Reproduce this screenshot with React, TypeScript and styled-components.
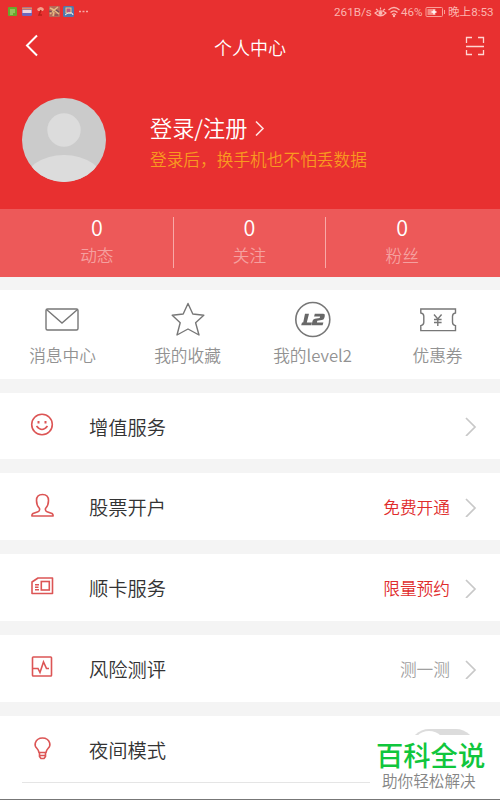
import React from "react";
import styled, { createGlobalStyle } from "styled-components";

const GlobalStyle = createGlobalStyle`
  *, *::before, *::after { box-sizing: border-box; }
  body { margin: 0; background: #f4f4f4; }
  svg { display: block; flex: none; }
`;

const Screen = styled.main`
  position: relative;
  width: 500px;
  height: 800px;
  overflow: hidden;
  background: #f4f4f4;
  font-family: "Noto Sans CJK SC", "Noto Sans", sans-serif;
  font-weight: 350;
  white-space: nowrap;
`;

const Hero = styled.header`
  height: 209px;
  background: #e83030;
  color: #fff;
`;

const StatusBar = styled.div`
  display: flex;
  justify-content: space-between;
  height: 23px;
  padding: 0 7px;
`;

const StatusGroup = styled.div`
  display: flex;
  align-items: center;
  height: 23px;
  color: #fbb4ae;
`;

const StatusText = styled.span<{ $width: number; $size?: number }>`
  width: ${(p) => p.$width}px;
  font-family: Roboto, "Noto Sans CJK SC", sans-serif;
  font-size: ${(p) => p.$size ?? 11.6}px;
  font-weight: 400;
  line-height: 22px;
  padding-top: 1px;
`;

const NavBar = styled.nav`
  display: flex;
  align-items: center;
  justify-content: space-between;
  height: 46px;
  padding: 0 15px 0 24px;
`;

const NavTitle = styled.h1`
  margin: 0;
  padding: 2px 5px 0 0;
  font-size: 18px;
  font-weight: 350;
  line-height: 24px;
`;

const Profile = styled.section`
  display: flex;
  padding: 29px 0 0 22px;
`;

const ProfileText = styled.div`
  padding: 13px 0 0 44px;
`;

const LoginLink = styled.div`
  display: flex;
  align-items: center;
  gap: 8px;
  height: 34px;
  padding-bottom: 1px;
  font-size: 22.2px;
  line-height: 33px;
`;

const LoginHint = styled.div`
  color: #f99a20;
  font-size: 16.7px;
  line-height: 28px;
`;

const Stats = styled.section`
  display: flex;
  justify-content: center;
  height: 68px;
  padding: 8px 22px 0 21px;
  background: #ed5959;
`;

const Stat = styled.div`
  flex: 1;
  height: 51px;
  text-align: center;
  & + & { border-left: 1px solid #f8a9a7; }
`;

const StatValue = styled.div`
  color: #fff;
  font-size: 21.5px;
  line-height: 20px;
  height: 22px;
`;

const StatLabel = styled.div`
  color: #f5a09f;
  font-size: 16.7px;
  line-height: 32px;
`;

const Shortcuts = styled.section`
  display: grid;
  grid-template-columns: repeat(4, 1fr);
  height: 89px;
  margin: 13px 0 14px;
  background: #fff;
`;

const Shortcut = styled.div`
  display: flex;
  flex-direction: column;
  align-items: center;
  gap: 2px;
  padding-top: 9px;
  color: #929292;
  font-size: 16.7px;
  line-height: 29px;
`;

const MenuRow = styled.section<{ $height: number }>`
  display: flex;
  align-items: center;
  height: ${(p) => p.$height}px;
  margin-bottom: 14px;
  padding: 0 23px 0 29px;
  background: #fff;
`;

const MenuIcon = styled.div`
  width: 60px;
  padding-bottom: 3px;
`;

const MenuLabel = styled.div`
  flex: 1;
  padding-top: 1px;
  color: #333;
  font-size: 19.3px;
  line-height: 30px;
`;

const MenuNote = styled.div<{ $muted?: boolean }>`
  margin-right: 15px;
  color: ${(p) => (p.$muted ? "#a0a0a0" : "#df2d2d")};
  font-size: 16.7px;
  padding-top: 1px;
  line-height: 30px;
`;

const NightPanel = styled.section`
  height: 84px;
  background: #fff;
  border-bottom: 1px solid #777;
`;

const NightRow = styled(MenuRow)`
  margin: 0 0 0 22px;
  padding: 0 25px 0 7px;
  border-bottom: 1px solid #e5e5e5;
`;

const SwitchTrack = styled.div`
  width: 65px;
  height: 38px;
  margin-bottom: 3px;
  border-radius: 19px;
  background: #dcdcdc;
  padding: 2px;
`;

const SwitchKnob = styled.div`
  width: 34px;
  height: 34px;
  border-radius: 50%;
  background: #fff;
`;

const Watermark = styled.aside`
  position: absolute;
  right: 0;
  bottom: 1px;
  width: 130px;
  height: 64px;
  background: #fff;
`;

const WatermarkTitle = styled.div`
  padding: 3px 0 0 6px;
  color: #10c63c;
  font-size: 27.3px;
  font-weight: 500;
  line-height: 32px;
  height: 36px;
`;

const WatermarkText = styled.div`
  padding-left: 12px;
  color: #858585;
  font-size: 15.6px;
  line-height: 18px;
`;

const NotificationIcons = () => (
  <svg width="82" height="12" viewBox="0 0 82 12">
    <rect x="1" y="1" width="9" height="9" rx="1" fill="#69a82c" />
    <path d="M3 4h5M3 6h5M3 8h3" stroke="#bfd98b" fill="none" />
    <rect x="15" y="1" width="10" height="9" rx="1.5" fill="#6d66bd" />
    <path d="M15 2.5h10" stroke="#e58a62" strokeWidth="2" />
    <rect x="15.5" y="4" width="9" height="3" fill="#ecd4df" />
    <path d="M30 3q4-4 7 0l-1 2h-5z" fill="#f3a08b" />
    <path d="M34 4l-2 5h3" fill="none" stroke="#b82119" strokeWidth="1.5" />
    <rect x="42" y="0" width="11" height="11" rx="1" fill="#b5685a" />
    <path d="M43 2l4 2 4-3M43 8l4-4 5 4M47 6l-1 4" fill="none" stroke="#e3ba83" strokeWidth="1.5" />
    <path d="M49 4l3 2M42 5l3 1M48 9h3" stroke="#6d4b58" strokeWidth="1.2" />
    <rect x="56" y="0" width="11" height="11" rx="1.5" fill="#5277ae" />
    <rect x="59" y="2" width="5" height="5" fill="#b65386" stroke="#e7cd81" />
    <path d="M58 9l3-2h4l1 2" stroke="#eee" fill="none" />
    <path d="M72 5.5h2M75.5 5.5h2M79 5.5h2" stroke="#f7aaa5" strokeWidth="1.5" />
  </svg>
);

const StatusIcons = () => (
  <svg width="28" height="14" viewBox="0 0 28 14">
    <g fill="none" stroke="#fbb8b2" strokeWidth="1.2">
      <path d="M2 8Q7.500 3.500 13 8Q7.500 13.500 2 8Z" />
      <path d="M3 4l2 1.500M7.500 2.500v2M12 4l-2 1.500" />
      <path d="M15.500 5Q21 0 26.500 5M17.500 7.500Q21 4 24.500 7.500M19 9.700q2-1.700 4 0" />
    </g>
    <circle cx="7.5" cy="8" r="2" fill="#fbb8b2" />
    <circle cx="21" cy="11" r="1.2" fill="#fbb8b2" />
  </svg>
);

const Battery = () => (
  <svg width="23" height="12" viewBox="0 0 23 12">
    <rect x="1" y="1.5" width="16.5" height="9" rx="1" fill="none" stroke="#f99e98" />
    <rect x="2.5" y="3" width="8" height="6" fill="#f68a84" />
    <path d="M19.500 4v4" stroke="#f99e98" />
    <path d="M9 3.500v5M6.500 6h5" stroke="#fff" strokeWidth="1.3" />
  </svg>
);

const BackIcon = () => (
  <svg width="16" height="24" viewBox="0 0 16 24" fill="none" stroke="#fff" strokeWidth="2">
    <path d="M13 1.500L3 11.500l10 10" />
  </svg>
);

const ScanIcon = () => (
  <svg width="20" height="20" viewBox="0 0 20 20" fill="none" stroke="#ffd5d2" strokeWidth="1.3">
    <path d="M1.500 7V1.500H7M13 1.500h5.500V7M1.500 14v4.500H7M13 18.500h5.500V14M1 10.500h18" />
  </svg>
);

const Avatar = () => (
  <svg width="84" height="84" viewBox="0 0 84 84">
    <defs>
      <clipPath id="avatar-clip"><circle cx="42" cy="42" r="42" /></clipPath>
    </defs>
    <g clipPath="url(#avatar-clip)">
      <rect width="84" height="84" fill="#cbcbcb" />
      <circle cx="42" cy="32" r="16.7" fill="#dcdcdc" />
      <ellipse cx="42" cy="86" rx="41" ry="29" fill="#dcdcdc" />
    </g>
  </svg>
);

const Chevron = ({ light = false }: { light?: boolean }) =>
  light ? (
    <svg width="10" height="16" viewBox="0 0 10 16" fill="none" stroke="#ffe2e0" strokeWidth="1.6">
      <path d="M1 1.500l7 7-7 7" />
    </svg>
  ) : (
    <svg width="12" height="20" viewBox="0 0 12 20" fill="none" stroke="#c8c8c8" strokeWidth="1.7">
      <path d="M1 2l9 9-9 9" />
    </svg>
  );

const shortcutIcons = {
  mail: (
    <>
      <rect x="5" y="10" width="32" height="21" rx="1.5" />
      <path d="M5.500 10.500L21 24 36.500 10.500" />
    </>
  ),
  star: <path d="M22 4.500l4.800 10.500 11 1.300-8.200 7.400 3.400 12.300L22 30 11 36l3.200-12.300-8-7.400 11-1.300z" strokeLinejoin="round" />,
  level: (
    <>
      <circle cx="21.8" cy="20.5" r="17" strokeWidth="1.6" />
      <g fill="#686868" stroke="none">
        <path d="M14 14.800h4l-2.200 8.600h5.200l-.8 2.900h-10l.8-2.900h1.200z" />
        <path d="M23.800 14.800h8.500q2 0 1.500 2.100l-.5 2q-.5 1.900-2.500 2.200l-4.500.7-.4 1.600h6.500l-.8 2.900H20.500l1.100-4.500q.4-1.700 2.300-2l4.800-.7.400-1.500h-6z" />
      </g>
    </>
  ),
  coupon: (
    <>
      <path d="M4.800 10h34.700v4q-3 .4-3 3.300v6q0 2.900 3 3.300v5H4.800v-5q3-.4 3-3.300v-6q0-2.900-3-3.300z" />
      <path d="M18 15.500l3.800 4.500 3.800-4.500M21.800 20v7M18 20.500h7.600M18 23.500h7.600" />
    </>
  ),
};

const shortcuts: { label: string; icon: keyof typeof shortcutIcons }[] = [
  { label: "消息中心", icon: "mail" },
  { label: "我的收藏", icon: "star" },
  { label: "我的level2", icon: "level" },
  { label: "优惠券", icon: "coupon" },
];

const menuIcons = {
  smile: (
    <>
      <circle cx="13" cy="13.5" r="10.3" />
      <path d="M7.500 15q5.500 7 11 0" />
      <path d="M9.500 10v2.500M16.500 10v2.500" strokeWidth="2" />
    </>
  ),
  person: (
    <path d="M10.500 16.500q-3-3-3-8Q7.500 2.500 13.500 2.500t6 6q0 5-3 8-.6 2.500 1.500 3.200l5 1.800q1.400 1 1 2.500H3q-.4-1.500 1-2.500l5-1.800q2.100-.7 1.500-3.200z" strokeLinejoin="round" />
  ),
  card: (
    <>
      <path d="M9 5h14.500v15.500H3V9z" strokeLinejoin="round" />
      <rect x="12.3" y="8.5" width="8" height="8.5" />
      <path d="M6 11.800h4M6 14.300h3.500M6 16.800h4" />
    </>
  ),
  pulse: (
    <>
      <rect x="3.5" y="3" width="19" height="19" rx=".8" />
      <path d="M4 14.500h5l2 4 3.500-10.500 3 6.500H20" />
    </>
  ),
  bulb: (
    <path d="M10 18.500q-.4-2.200-2.200-4.200Q5.500 12 6.300 9 8 4 13.500 4T20.700 9q.8 3-1.500 5.300Q17.400 16.300 17 18.500zM10.500 18.500v4l1.500 2h3l1.500-2v-4M10.500 21.500h6" strokeLinejoin="round" />
  ),
};

const MenuGlyph = ({ name }: { name: keyof typeof menuIcons }) => (
  <MenuIcon>
    <svg width="27" height="27" viewBox="0 0 27 27" fill="none" stroke="#dc5555" strokeWidth="1.6">
      {menuIcons[name]}
    </svg>
  </MenuIcon>
);

interface MenuItem {
  label: string;
  icon: keyof typeof menuIcons;
  height: number;
  note?: string;
  muted?: boolean;
}

const menu: MenuItem[] = [
  { label: "增值服务", icon: "smile", height: 66 },
  { label: "股票开户", icon: "person", height: 67, note: "免费开通" },
  { label: "顺卡服务", icon: "card", height: 67, note: "限量预约" },
  { label: "风险测评", icon: "pulse", height: 67, note: "测一测", muted: true },
];

const stats = ["动态", "关注", "粉丝"];

export default function App() {
  return (
    <Screen>
      <GlobalStyle />
      <Hero>
        <StatusBar>
          <StatusGroup><NotificationIcons /></StatusGroup>
          <StatusGroup>
            <StatusText $width={39} $size={11.7}>261B/s</StatusText>
            <StatusIcons />
            <StatusText $width={24}>46%</StatusText>
            <Battery />
            <StatusText $width={45}>晚上8:53</StatusText>
          </StatusGroup>
        </StatusBar>
        <NavBar>
          <BackIcon />
          <NavTitle>个人中心</NavTitle>
          <ScanIcon />
        </NavBar>
        <Profile>
          <Avatar />
          <ProfileText>
            <LoginLink>登录/注册<Chevron light /></LoginLink>
            <LoginHint>登录后，换手机也不怕丢数据</LoginHint>
          </ProfileText>
        </Profile>
      </Hero>
      <Stats>
        {stats.map((label) => (
          <Stat key={label}>
            <StatValue>0</StatValue>
            <StatLabel>{label}</StatLabel>
          </Stat>
        ))}
      </Stats>
      <Shortcuts>
        {shortcuts.map(({ label, icon }) => (
          <Shortcut key={label}>
            <svg width="43" height="40" viewBox="0 0 43 40" fill="none" stroke="#777" strokeWidth="1.4">
              {shortcutIcons[icon]}
            </svg>
            {label}
          </Shortcut>
        ))}
      </Shortcuts>
      {menu.map(({ label, icon, height, note, muted }) => (
        <MenuRow key={label} $height={height}>
          <MenuGlyph name={icon} />
          <MenuLabel>{label}</MenuLabel>
          {note && <MenuNote $muted={muted}>{note}</MenuNote>}
          <Chevron />
        </MenuRow>
      ))}
      <NightPanel>
        <NightRow $height={67}>
          <MenuGlyph name="bulb" />
          <MenuLabel>夜间模式</MenuLabel>
          <SwitchTrack><SwitchKnob /></SwitchTrack>
        </NightRow>
      </NightPanel>
      <Watermark>
        <WatermarkTitle>百科全说</WatermarkTitle>
        <WatermarkText>助你轻松解决</WatermarkText>
      </Watermark>
    </Screen>
  );
}
